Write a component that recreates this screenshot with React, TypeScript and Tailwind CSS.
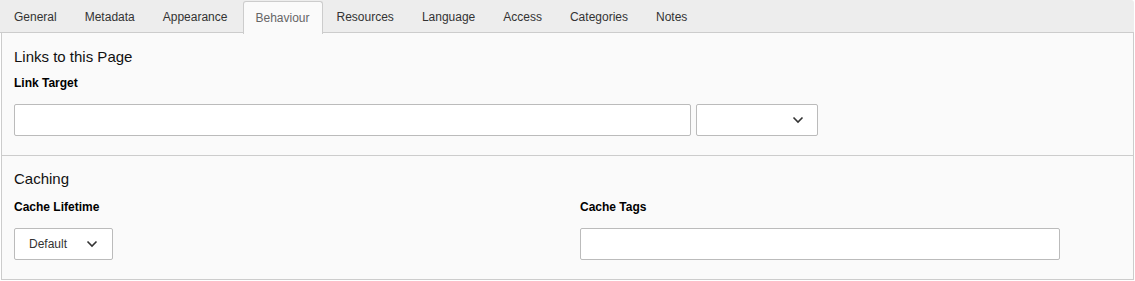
const tabs = ['General', 'Metadata', 'Appearance', 'Behaviour', 'Resources', 'Language', 'Access', 'Categories', 'Notes'];

function Chevron() {
  return (
    <svg width="12" height="8" viewBox="0 0 12 8" fill="none" className="text-[#333]">
      <path d="M1.5 1.5L6 6L10.5 1.5" stroke="currentColor" strokeWidth="1.6" />
    </svg>
  );
}

function Label({ children }: { children: React.ReactNode }) {
  return <div className="text-[12px] leading-[18px] font-bold text-[#000]">{children}</div>;
}

export default function App() {
  return (
    <div className="w-[1135px] h-[281px] bg-white font-['Liberation_Sans',Arial,sans-serif] text-[#333]">
      <div className="w-[1134px]">
        <div className="flex h-[33px] bg-[#ededed] border-b border-[#cccccc] rounded-tr-[3px] pt-px">
          {tabs.map((t) => (
            <div
              key={t}
              className={
                t === 'Behaviour'
                  ? 'ml-[2px] pl-[11px] pr-[12px] h-[33px] -mb-px flex items-center text-[12px] text-[#666] bg-[#fafafa] border border-b-0 border-[#cccccc] rounded-t-[3px]'
                  : 'px-[14px] h-[32px] pb-px flex items-center text-[12px] text-[#333]'
              }
            >
              {t}
            </div>
          ))}
        </div>
        <div className="ml-px w-[1133px] bg-[#fafafa] border-x border-b border-[#cccccc]">
          <div className="px-[12px] pt-[14px] pb-[19px] border-b border-[#cccccc]">
            <div className="text-[15px] leading-[20px] text-[#111]">Links to this Page</div>
            <div className="mt-[7px]">
              <Label>Link Target</Label>
            </div>
            <div className="mt-[12px] flex gap-[5px]">
              <div className="w-[677px] h-[32px] bg-white border border-[#bbbbbb] rounded-[2px]" />
              <div className="w-[122px] h-[32px] bg-white border border-[#bbbbbb] rounded-[2px] flex items-center justify-end pr-[13px]">
                <Chevron />
              </div>
            </div>
          </div>
          <div className="px-[12px] pt-[13px] pb-[19px]">
            <div className="text-[15px] leading-[20px] text-[#111]">Caching</div>
            <div className="grid grid-cols-[566px_1fr]">
              <div>
                <div className="mt-[9px]">
                  <Label>Cache Lifetime</Label>
                </div>
                <div className="mt-[12px] w-[99px] h-[32px] bg-white border border-[#bbbbbb] rounded-[2px] flex items-center justify-between pl-[14px] pr-[14px]">
                  <span className="text-[12px] text-[#333]">Default</span>
                  <Chevron />
                </div>
              </div>
              <div>
                <div className="mt-[9px]">
                  <Label>Cache Tags</Label>
                </div>
                <div className="mt-[12px] w-[480px] h-[32px] bg-white border border-[#bbbbbb] rounded-[2px]" />
              </div>
            </div>
          </div>
        </div>
      </div>
    </div>
  );
}
